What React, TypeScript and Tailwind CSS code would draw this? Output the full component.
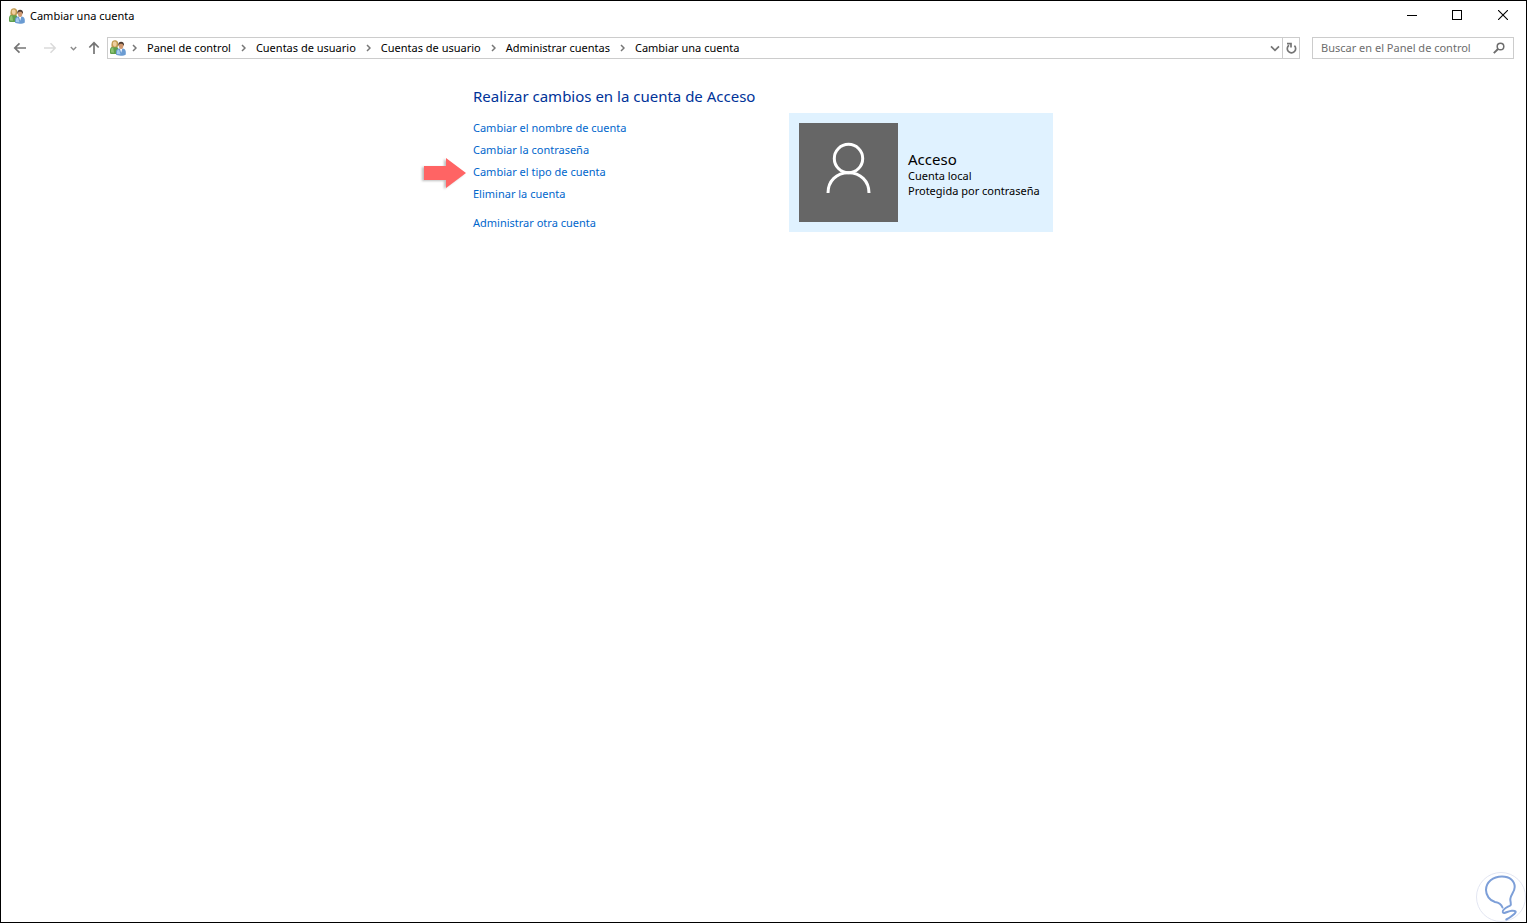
import type { ReactNode } from "react";

const crumbs = [
  "Panel de control",
  "Cuentas de usuario",
  "Cuentas de usuario",
  "Administrar cuentas",
  "Cambiar una cuenta",
];

const accountLinks = [
  { label: "Cambiar el nombre de cuenta" },
  { label: "Cambiar la contraseña" },
  { label: "Cambiar el tipo de cuenta", marked: true },
  { label: "Eliminar la cuenta" },
];

function UsersIcon() {
  return (
    <svg width="16" height="16" viewBox="0 0 16 16" className="shrink-0" aria-hidden="true">
      <path d="M0 13.5V10c0-2.2 1.4-3.4 3.6-3.6h2.2c1.6.2 2.6 1.4 2.6 3.4v3.4l-2 .8H1.4z" fill="#5f9e4c" />
      <path d="M1 12.5V10c0-1.6 1-2.4 2.2-2.6L4 12.8z" fill="#8cc474" />
      <path d="M1.5 6.8C1.2 2.6 2 .3 4.7.2c2.6 0 3.9 1.5 3.7 5.8L7 7.2H2.4z" fill="#c09a50" />
      <path d="M2.8 3.6c0-1.4.9-2 2-2s1.9.7 1.9 2.1c0 1.7-.8 3-1.9 3s-2-1.4-2-3.1z" fill="#f0cfa0" />
      <path d="M6 14.6V12c0-2.1 1.2-3.3 3.5-3.5h2.8c2.3.2 3.5 1.5 3.5 3.6v2.4c-1.2 1.5-8.4 1.7-9.8.1z" fill="#6a9bd2" />
      <path d="M7 14v-2c0-1.5.8-2.3 2-2.6l1.5 4.9z" fill="#a5cbee" />
      <path d="M9.9 8.5h2.4l-1.1 4.3z" fill="#fff" />
      <path d="M8.3 5.6c-.2-2.4.8-3.8 2.8-3.8s3.2 1.4 2.9 3.8z" fill="#4b3a30" />
      <path d="M8.8 5.4c.2-1.3 1-1.7 2.3-1.7s2.2.5 2.3 1.7c0 2.1-.9 3.6-2.3 3.6S8.8 7.5 8.8 5.4z" fill="#cf9870" />
    </svg>
  );
}

function Crumb({ children }: { children: ReactNode }) {
  return (
    <li className="flex items-center">
      <svg width="5" height="8" viewBox="0 0 5 8" fill="none" stroke="#777" strokeWidth="1.5" aria-hidden="true">
        <path d="M1 1l3 3-3 3" />
      </svg>
      <a href="#" className="px-[10px] whitespace-nowrap">{children}</a>
    </li>
  );
}

function TitleBar() {
  return (
    <header className="flex h-[30px] justify-between pl-2">
      <div className="flex items-center gap-[5px]">
        <UsersIcon />
        <h1>Cambiar una cuenta</h1>
      </div>
      <div className="flex">
        <button aria-label="Minimizar" className="flex h-7 w-[45px] items-center justify-center">
          <svg width="10" height="10" viewBox="0 0 10 10" stroke="#000" shapeRendering="crispEdges">
            <path d="M0 5.5h10" />
          </svg>
        </button>
        <button aria-label="Maximizar" className="flex h-7 w-[46px] items-center justify-center">
          <svg width="10" height="10" viewBox="0 0 10 10" fill="none" stroke="#000" shapeRendering="crispEdges">
            <path d="M.5.5h9v9h-9z" />
          </svg>
        </button>
        <button aria-label="Cerrar" className="flex h-7 w-[46px] items-center justify-center">
          <svg width="10" height="10" viewBox="0 0 10 10" stroke="#000" strokeWidth="1.1">
            <path d="M0 0l10 10M10 0L0 10" />
          </svg>
        </button>
      </div>
    </header>
  );
}

function NavBar() {
  return (
    <nav className="mt-[6px] flex h-[22px] items-center px-3">
      <button aria-label="Atrás" className="flex w-[14px] justify-center">
        <svg width="14" height="12" viewBox="0 0 14 12" fill="none" stroke="#757575" strokeWidth="1.7">
          <path d="M13 6H2M6.5 1.3L1.8 6l4.7 4.7" />
        </svg>
      </button>
      <button aria-label="Adelante" disabled className="ml-4 flex w-[14px] justify-center">
        <svg width="14" height="12" viewBox="0 0 14 12" fill="none" stroke="#dadada" strokeWidth="1.5">
          <path d="M1 6h11M7.5 1.3L12.2 6l-4.7 4.7" />
        </svg>
      </button>
      <button aria-label="Ubicaciones recientes" className="ml-3 flex w-2 justify-center">
        <svg width="7" height="5" viewBox="0 0 7 5" fill="none" stroke="#8a8a8a" strokeWidth="1.4">
          <path d="M.8 1l2.7 2.7L6.2 1" />
        </svg>
      </button>
      <button aria-label="Subir" className="ml-[11px] flex w-3 justify-center">
        <svg width="12" height="14" viewBox="0 0 12 14" fill="none" stroke="#757575" strokeWidth="1.7">
          <path d="M6 13V2M1.3 6.5L6 1.8l4.7 4.7" />
        </svg>
      </button>

      <div className="ml-[7px] flex h-[22px] min-w-0 flex-1 items-center border border-[#cccccc] pl-[2px]">
        <UsersIcon />
        <ol className="ml-[6px] flex min-w-0 flex-1 overflow-hidden">
          {crumbs.map((crumb, i) => (
            <Crumb key={i}>{crumb}</Crumb>
          ))}
        </ol>
        <button aria-label="Ubicaciones anteriores" className="flex h-full w-[15px] items-center justify-center">
          <svg width="10" height="7" viewBox="0 0 10 7" fill="none" stroke="#757575" strokeWidth="1.7">
            <path d="M1 1.3l4 4 4-4" />
          </svg>
        </button>
        <button aria-label="Actualizar" className="flex h-full w-[17px] items-center justify-center border-l border-[#cccccc]">
          <svg width="12" height="12" viewBox="0 0 12 12" fill="none" stroke="#757575" strokeWidth="1.7">
            <path d="M9.4 3.6A4.2 4.2 0 1 1 4 3.2" />
            <path d="M2 1.6h4V5.6" />
          </svg>
        </button>
      </div>

      <label className="ml-3 flex h-[22px] w-[202px] items-center border border-[#cccccc] px-2">
        <input
          type="search"
          aria-label="Buscar en el Panel de control"
          placeholder="Buscar en el Panel de control"
          className="min-w-0 flex-1 outline-none placeholder:text-[#6d6d6d]"
        />
        <svg width="12" height="12" viewBox="0 0 12 12" fill="none" stroke="#6d6d6d" strokeWidth="1.5" aria-hidden="true">
          <circle cx="7.5" cy="4.5" r="3.3" />
          <path d="M5 7L.8 11.2" strokeWidth="1.9" />
        </svg>
      </label>
    </nav>
  );
}

function MarkerArrow() {
  return (
    <svg
      width="46"
      height="34"
      viewBox="0 0 46 34"
      className="absolute top-1/2 right-full mr-[7px] -translate-y-1/2 drop-shadow-[-2px_1px_1px_rgba(0,0,0,0.25)]"
      aria-hidden="true"
    >
      <path d="M4 11h22V3l20 15-20 15v-8H4z" fill="#ff6464" />
    </svg>
  );
}

function AccountCard() {
  return (
    <section className="mt-[26px] flex w-[264px] shrink-0 items-center gap-[10px] self-start bg-[#e0f2ff] p-[10px]">
      <svg width="99" height="99" viewBox="0 0 99 99" fill="none" stroke="#fff" strokeWidth="3" className="shrink-0" aria-hidden="true">
        <path d="M0 0h99v99H0z" fill="#666" stroke="none" />
        <circle cx="49.5" cy="35.5" r="14.2" />
        <path d="M29 70c0-12 8.5-20.3 20.5-20.3S70 58 70 70" />
      </svg>
      <div className="pt-[2px] whitespace-nowrap text-black">
        <h3 className="text-[15px] leading-[18px]">Acceso</h3>
        <p className="leading-[15px]">Cuenta local</p>
        <p className="leading-[15px]">Protegida por contraseña</p>
      </div>
    </section>
  );
}

function BulbMark() {
  return (
    <svg width="50" height="50" viewBox="0 0 50 50" fill="none" className="absolute right-0 bottom-0" aria-hidden="true">
      <circle cx="25" cy="25" r="24.5" fill="#fff" stroke="#e3e6f2" />
      <path
        d="M26.5 35.5C25 31.5 22.500 30.500 19 30 13.500 28.500 10 23 10 18 10 10 17 4.500 26 4.500c8 0 12.700 4.500 12.700 10.500 0 5-4 7.500-4.400 12-.2 3 1.500 5 0 6.500-2.500 1.500-8 3.500-7.500 6.500.5 2.500 5-.8 9-1.200 4-.3 5 1 2.500 3.200-2.300 2-4.500 4-8 5.500"
        stroke="#7d9fd8"
        strokeWidth="2"
        strokeLinecap="round"
      />
    </svg>
  );
}

export default function App() {
  return (
    <div className="relative flex min-h-screen flex-col border border-black bg-white font-['Noto_Sans',sans-serif] text-[11px] leading-4 text-black">
      <TitleBar />
      <NavBar />
      <main className="flex flex-1 justify-center pt-7 pr-px">
        <section className="w-[316px]">
          <h2 className="text-[15px] leading-[18px] whitespace-nowrap text-[#003399]">
            Realizar cambios en la cuenta de Acceso
          </h2>
          <ul className="mt-[15px] flex flex-col gap-[6px] text-[#0066cc]">
            {accountLinks.map((link) => (
              <li key={link.label} className="relative">
                {link.marked && <MarkerArrow />}
                <a href="#">{link.label}</a>
              </li>
            ))}
          </ul>
          <a href="#" className="mt-[13px] inline-block text-[#0066cc]">Administrar otra cuenta</a>
        </section>
        <AccountCard />
      </main>
      <BulbMark />
    </div>
  );
}
